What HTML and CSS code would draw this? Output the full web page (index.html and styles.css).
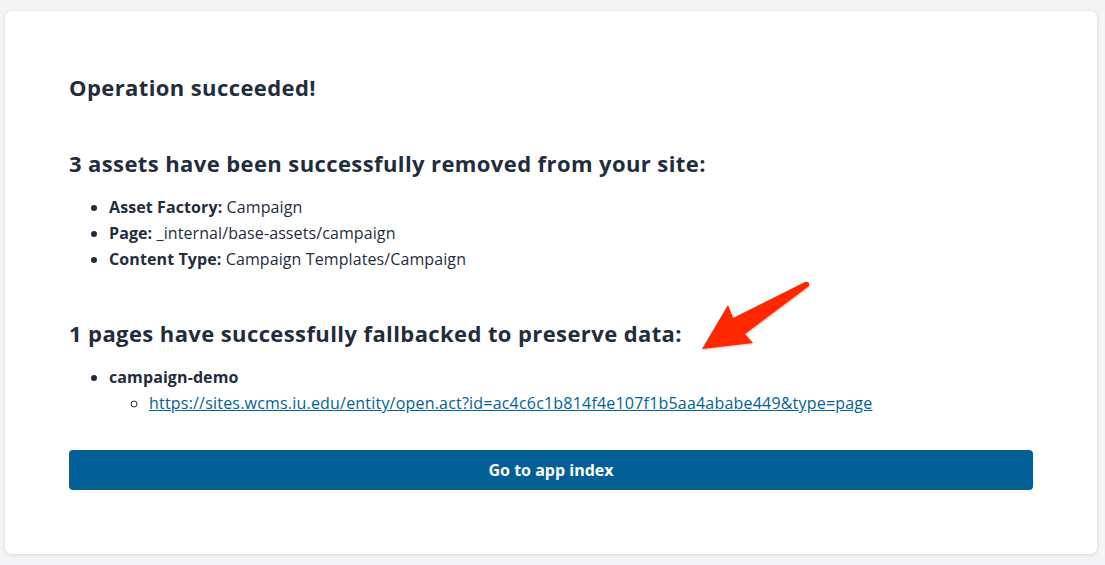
FILE: index.html
```html
<!DOCTYPE html>
<html lang="en">
<head>
<meta charset="UTF-8">
<title>Operation succeeded</title>
<link rel="stylesheet" href="styles.css">
</head>
<body>

<div class="card">
  <h1>Operation succeeded!</h1>

  <h2>3 assets have been successfully removed from your site:</h2>
  <ul>
    <li><strong>Asset Factory:</strong> Campaign</li>
    <li><strong>Page:</strong> _internal/base-assets/campaign</li>
    <li><strong>Content Type:</strong> Campaign Templates/Campaign</li>
  </ul>

  <h2>1 pages have successfully fallbacked to preserve data:</h2>
  <ul>
    <li><strong>campaign-demo</strong>
      <ul>
        <li><a href="#">https://sites.wcms.iu.edu/entity/open.act?id=ac4c6c1b814f4e107f1b5aa4ababe449&amp;type=page</a></li>
      </ul>
    </li>
  </ul>

  <button class="btn">Go to app index</button>
</div>

<!-- annotation arrow -->
<svg class="arrow" width="1105" height="565" viewBox="0 0 1105 565">
  <path d="M702 349 L728 305 L733 318 L805 282 Q810 281 809 286 L745 334 L753 343 Z" fill="#ff2600"/>
</svg>

</body>
</html>
```

FILE: styles.css
```css
body {
  margin: 0;
  padding: 11px 8px 12px 5px;
  background: #f3f4f6;
  font-family: "Open Sans", "Liberation Sans", Arial, sans-serif;
  color: #1f2d3d;
}
.card {
  background: #fff;
  border-radius: 7px;
  box-shadow: 0 1px 4px rgba(0, 0, 0, 0.12);
  padding: 64px;
}
h1, h2 {
  font-size: 22px;
  line-height: 24px;
  font-weight: 700;
  letter-spacing: 0.4px;
  margin: 0;
}
h1 {
  padding-bottom: 3px;
}
h2 {
  margin-top: 49px;
}
ul {
  margin: 19px 0 0;
  padding-left: 40px;
  font-size: 16px;
  line-height: 26px;
  letter-spacing: 0.1px;
}
ul ul {
  margin: 0;
  list-style: circle;
}
a {
  color: #006298;
  letter-spacing: 0.2px;
}
.btn {
  display: block;
  width: 100%;
  height: 40px;
  margin-top: 34px;
  border: none;
  border-radius: 4px;
  background: #036097;
  color: #fff;
  font-family: inherit;
  font-size: 16px;
  font-weight: 700;
  cursor: pointer;
}
.arrow {
  position: absolute;
  top: 0;
  left: 0;
  pointer-events: none;
  filter: drop-shadow(0 1px 1px rgba(0, 0, 0, 0.25));
}
```
